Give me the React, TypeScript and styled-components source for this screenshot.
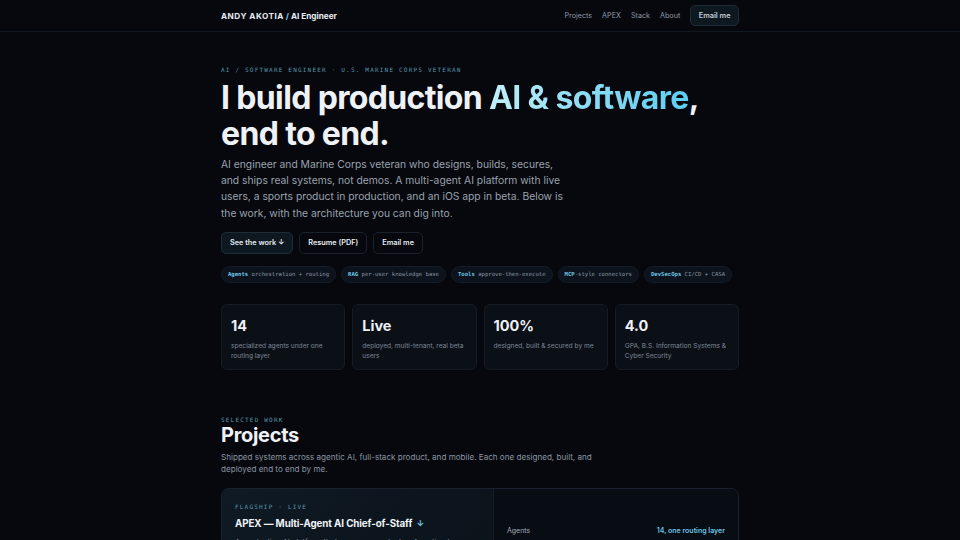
import styled, { createGlobalStyle } from "styled-components";

const GlobalStyle = createGlobalStyle`
  html, body {
    margin: 0;
    padding: 0;
    background: #06080d;
    color: #e6edf3;
    font-family: Inter, "Noto Sans", sans-serif;
  }
  * { box-sizing: border-box; }
`;

const mono = `"DejaVu Sans Mono", "Liberation Mono", monospace`;

const chips = [
  { key: "Agents", rest: " orchestration + routing" },
  { key: "RAG", rest: " per-user knowledge base" },
  { key: "Tools", rest: " approve-then-execute" },
  { key: "MCP", rest: "-style connectors" },
  { key: "DevSecOps", rest: " CI/CD + CASA" },
];

const stats = [
  { value: "14", label: "specialized agents under one routing layer" },
  { value: "Live", label: "deployed, multi-tenant, real beta users" },
  { value: "100%", label: "designed, built & secured by me" },
  { value: "4.0", label: "GPA, B.S. Information Systems & Cyber Security" },
];

export default function App() {
  return (
    <Page>
      <GlobalStyle />
      <Header>
        <Inner>
          <Logo>
            <span className="name">ANDY AKOTIA</span>
            <span className="slash"> / </span>
            AI Engineer
          </Logo>
          <Nav>
            <NavLink>Projects</NavLink>
            <NavLink>APEX</NavLink>
            <NavLink>Stack</NavLink>
            <NavLink>About</NavLink>
            <Button $primary>Email me</Button>
          </Nav>
        </Inner>
      </Header>

      <Main>
        <Hero>
          <Eyebrow>AI / SOFTWARE ENGINEER · U.S. MARINE CORPS VETERAN</Eyebrow>
          <Headline>
            I build production <Accent>AI &amp; software</Accent>,<br />
            end to end.
          </Headline>
          <Lead>
            AI engineer and Marine Corps veteran who designs, builds, secures,
            and ships real systems, not demos. A multi-agent AI platform with
            live users, a sports product in production, and an iOS app in beta.
            Below is the work, with the architecture you can dig into.
          </Lead>
          <Actions>
            <Button $primary $large>See the work ↓</Button>
            <Button $large>Resume (PDF)</Button>
            <Button $large>Email me</Button>
          </Actions>
          <Chips>
            {chips.map((c) => (
              <Chip key={c.key}>
                <b>{c.key}</b>
                {c.rest}
              </Chip>
            ))}
          </Chips>
          <Stats>
            {stats.map((s) => (
              <StatCard key={s.value}>
                <StatValue>{s.value}</StatValue>
                <StatLabel>{s.label}</StatLabel>
              </StatCard>
            ))}
          </Stats>
        </Hero>

        <Section>
          <Eyebrow>SELECTED WORK</Eyebrow>
          <SectionTitle>Projects</SectionTitle>
          <SectionLead>
            Shipped systems across agentic AI, full-stack product, and mobile.
            Each one designed, built, and deployed end to end by me.
          </SectionLead>
          <ProjectCard>
            <ProjectMain>
              <Eyebrow>FLAGSHIP · LIVE</Eyebrow>
              <ProjectTitle>
                APEX — Multi-Agent AI Chief-of-Staff <span>↓</span>
              </ProjectTitle>
              <ProjectText>
                A production AI platform that runs a person's day. A routing
                layer sends each request to the right agent.
              </ProjectText>
            </ProjectMain>
            <ProjectSide>
              <SpecRow>
                <span>Agents</span>
                <b>14, one routing layer</b>
              </SpecRow>
            </ProjectSide>
          </ProjectCard>
        </Section>
      </Main>
    </Page>
  );
}

const Page = styled.div`
  min-height: 540px;
  background: #06080d;
`;

const Header = styled.header`
  border-bottom: 1px solid #121821;
  background: #06080e;
`;

const Inner = styled.div`
  width: 518px;
  margin: 0 auto;
  height: 31px;
  display: flex;
  align-items: center;
  justify-content: space-between;
`;

const Logo = styled.div`
  font-size: 8.2px;
  font-weight: 700;
  color: #e8edf2;
  .name { letter-spacing: 0.06em; }
  .slash { color: #7fcde6; }
`;

const Nav = styled.nav`
  display: flex;
  align-items: center;
  gap: 10px;
`;

const NavLink = styled.a`
  font-size: 7.2px;
  color: #8e98a6;
  cursor: pointer;
`;

const Button = styled.button<{ $primary?: boolean; $large?: boolean }>`
  font-family: Inter, sans-serif;
  font-size: 7.3px;
  font-weight: 600;
  color: ${(p) => (p.$primary && !p.$large ? "#c5cfd9" : "#e6edf3")};
  height: ${(p) => (p.$large ? "22px" : "21px")};
  padding: 0 ${(p) => (p.$large ? "8px" : "7.5px")};
  border-radius: 5px;
  border: 1px solid ${(p) => (p.$primary ? "#1d2c37" : "#1a212b")};
  background: ${(p) => (p.$primary ? "#0e1820" : "#06080d")};
`;

const Main = styled.main`
  width: 518px;
  margin: 0 auto;
`;

const Hero = styled.section`
  padding-top: 34px;
`;

const Eyebrow = styled.div`
  font-family: ${mono};
  font-size: 6px;
  letter-spacing: 0.2em;
  color: #5896ae;
  line-height: 8px;
`;

const Headline = styled.h1`
  margin: 6px 0 0;
  font-size: 32px;
  line-height: 36px;
  font-weight: 700;
  letter-spacing: -0.02em;
  color: #eef2f6;
`;

const Accent = styled.span`
  background: linear-gradient(90deg, #c3eff8 0%, #8fdcf3 45%, #5ccdf2 100%);
  -webkit-background-clip: text;
  background-clip: text;
  color: transparent;
`;

const Lead = styled.p`
  margin: 4px 0 0;
  width: 342px;
  font-size: 10.3px;
  line-height: 16.2px;
  color: #9aa2ae;
`;

const Actions = styled.div`
  display: flex;
  gap: 6px;
  margin-top: 11px;
`;

const Chips = styled.div`
  display: flex;
  gap: 5px;
  margin-top: 12px;
`;

const Chip = styled.span`
  font-family: ${mono};
  font-size: 5.6px;
  height: 17px;
  line-height: 15px;
  display: inline-block;
  padding: 0 6px;
  border-radius: 9px;
  background: #0c131c;
  border: 1px solid #131c27;
  color: #8b95a3;
  white-space: pre;
  b { color: #6cc6e6; font-weight: 700; }
`;

const Stats = styled.div`
  display: grid;
  grid-template-columns: repeat(4, 1fr);
  gap: 7px;
  margin-top: 21px;
`;

const StatCard = styled.div`
  height: 66px;
  padding: 12px 9px;
  border-radius: 6px;
  border: 1px solid #151c26;
  background: #0b0f16;
`;

const StatValue = styled.div`
  font-size: 14.5px;
  font-weight: 700;
  color: #eef2f6;
  line-height: 18px;
`;

const StatLabel = styled.div`
  margin-top: 6px;
  font-size: 6.6px;
  line-height: 10.5px;
  color: #7f8896;
`;

const Section = styled.section`
  padding-top: 46px;
`;

const SectionTitle = styled.h2`
  margin: 0;
  font-size: 20px;
  line-height: 22px;
  font-weight: 700;
  color: #eef2f6;
  letter-spacing: -0.015em;
`;

const SectionLead = styled.p`
  margin: 5px 0 0;
  width: 375px;
  font-size: 8.1px;
  line-height: 12.5px;
  color: #8c95a2;
`;

const ProjectCard = styled.div`
  margin-top: 12px;
  display: grid;
  grid-template-columns: 272px 1fr;
  border: 1px solid #1a2230;
  border-radius: 8px;
  overflow: hidden;
  height: 120px;
`;

const ProjectMain = styled.div`
  padding: 14px 13px;
  border-right: 1px solid #151d28;
  background: linear-gradient(135deg, #0f1a24 0%, #0a1119 100%);
`;

const ProjectTitle = styled.h3`
  margin: 6px 0 0;
  font-size: 9.8px;
  font-weight: 700;
  letter-spacing: -0.01em;
  color: #eef2f6;
  line-height: 14px;
  span { color: #6cc6e6; font-size: 8.5px; margin-left: 2px; }
`;

const ProjectText = styled.p`
  margin: 6px 0 0;
  font-size: 7.5px;
  line-height: 12px;
  color: #8c95a2;
`;

const ProjectSide = styled.div`
  padding: 37px 13px 0;
  background: #080c13;
`;

const SpecRow = styled.div`
  display: flex;
  justify-content: space-between;
  font-size: 7px;
  color: #a4adb9;
  b { color: #6cc6e6; font-weight: 600; }
`;
